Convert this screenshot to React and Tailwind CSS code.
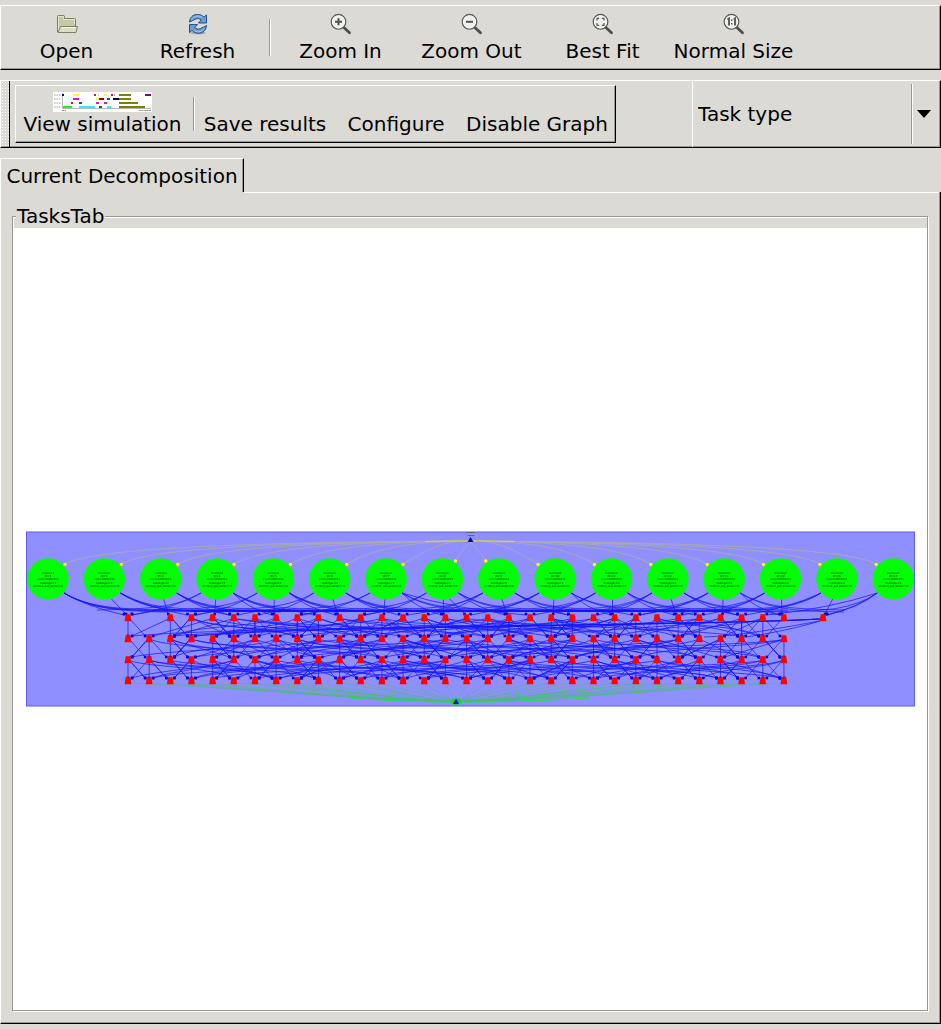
import React from "react";

const FONT = "font-['DejaVu_Sans',sans-serif]";
const RAISED = "border-t border-l border-t-white border-l-white border-b border-r border-b-black border-r-black shadow-[inset_-1px_-1px_0_#9b9890]";

function Lens({ children }) {
  return (
    <svg width="24" height="24" viewBox="0 0 24 24" aria-hidden="true">
      <path d="M14.6 15.2 L20.5 20.8" stroke="#4b4e4b" strokeWidth="2.8" strokeLinecap="round" />
      <circle cx="9.5" cy="9.8" r="7.3" fill="#efefed" stroke="#5a5d5a" strokeWidth="1.3" />
      <circle cx="9.5" cy="9.8" r="6.2" fill="none" stroke="#fff" strokeWidth="0.8" opacity="0.7" />
      {children}
    </svg>
  );
}

const icons = {
  open: (
    <svg width="24" height="24" viewBox="0 0 24 24" aria-hidden="true">
      <path d="M2.5 20 V4.5 Q2.5 3.5 3.5 3.5 H8.5 Q9.5 3.5 9.5 4.5 V6.5 H19.5 Q20.5 6.5 20.5 7.5 V19" fill="#c5caa4" stroke="#7d8165" />
      <path d="M3.5 19 V4.5 H8.5 V7.5 H19.5 V12" fill="none" stroke="#e3e6cf" />
      <path d="M5.5 14.5 H22.5 L21 20.5 H3 Z" fill="#d9e1c2" stroke="#7d8165" strokeLinejoin="round" />
      <path d="M6.3 15.5 H21.2" stroke="#f2f5e6" />
    </svg>
  ),
  refresh: (
    <svg width="24" height="24" viewBox="0 0 24 24" aria-hidden="true">
      <ellipse cx="12" cy="21" rx="8" ry="1.5" fill="#8b8d8a" opacity="0.6" />
      <g fill="#6d9bd3" stroke="#1f4b87" strokeLinejoin="round">
        <path d="M3.5 10 C4 5 7 2.5 11.5 2.5 C14.5 2.5 16.5 3.5 18 5.2 L20.5 3 V11 H12.5 L15.2 8 C13.8 6.6 11.8 6.2 9.8 7 C7.5 7.8 6 9 3.5 10 Z" />
        <path d="M20.5 13.5 C20 18.5 17 21.2 12.5 21.2 C9.5 21.2 7.5 20.2 6 18.4 L3.5 20.6 V12.6 H11.5 L8.8 15.6 C10.2 17 12.2 17.4 14.2 16.7 C16.5 15.9 18 14.7 20.5 13.5 Z" />
      </g>
      <path d="M5.5 7.5 C7 4.5 12 2.8 16 5.2 M18 16.5 C16 19.8 12 20.8 8.5 18.7" fill="none" stroke="#a9c7ea" />
    </svg>
  ),
  zoomIn: <Lens><path d="M6 9.8 H13 M9.5 6.3 V13.3" stroke="#4f524f" strokeWidth="2" /></Lens>,
  zoomOut: <Lens><path d="M6 9.8 H13" stroke="#4f524f" strokeWidth="2" /></Lens>,
  bestFit: <Lens><path d="M6 8.5 V6.3 H8.2 M10.8 6.3 H13 V8.5 M13 11.1 V13.3 H10.8 M8.2 13.3 H6 V11.1" fill="none" stroke="#5a5d5a" strokeWidth="1.2" /></Lens>,
  normal: <Lens><path d="M5.5 7.5 L7 6.5 V13.5 M11.8 7.5 L13 6.5 V13.5" fill="none" stroke="#4f524f" strokeWidth="1.8" /><path d="M9.7 7.5 V9 M9.7 11 V12.5" stroke="#4f524f" strokeWidth="1.3" /></Lens>,
};

const BARS = [
  [9, 2, 2, "#000080"], [20, 2, 6, "#ffff33"], [41, 2, 2, "#c02020"], [45, 2, 1, "#f3c0c0"], [51, 2, 3, "#ffff33"], [58, 2, 2, "#c02030"], [61, 2, 1, "#a0a0c0"], [66, 2, 12, "#808000"], [92, 2, 6, "#800080"],
  [20, 6, 6, "#dd11dd"], [43, 6, 3, "#ffff33"], [46, 6, 5, "#800000"], [54, 6, 3, "#007020"], [60, 6, 6, "#000070"], [66, 6, 12, "#808000"],
  [18, 10, 2, "#c02020"], [26, 10, 3, "#007020"], [43, 10, 3, "#dd11dd"], [51, 10, 3, "#dd11dd"], [66, 10, 19, "#808000"],
  [10, 14, 9, "#22ee22"], [26, 14, 16, "#33eeee"], [46, 14, 3, "#007020"], [54, 14, 4, "#33eeee"], [66, 14, 26, "#808000"],
];

function Timeline() {
  return (
    <svg width="99" height="20" viewBox="0 0 99 20" aria-hidden="true">
      <rect width="99" height="20" fill="#fff" />
      <path d="M9.5 1 V16.5 H98" fill="none" stroke="#999" strokeWidth="0.7" />
      {[3, 7, 11, 15].map((y) => <path key={y} d={`M1 ${y} H5 M6 ${y} H8`} stroke="#999" strokeDasharray="1 0.5" />)}
      {BARS.map(([x, y, w, c]) => <rect key={`${x}-${y}`} x={x} y={y} width={w} height="2" fill={c} />)}
      <path d="M9 18.5 H13 M86 18.5 H98" stroke="#999" strokeDasharray="2 0.5" />
    </svg>
  );
}

const ROWS = [618, 639, 660, 681];
const col = (j) => 128 + j * 21.16;
const circles = Array.from({ length: 16 }, (_, i) => 48 + i * 56.35);
const slotX = (r, j) => (r === 0 && j === 1 ? 823 : col(j));
const nodes = ROWS.flatMap((y, r) => Array.from({ length: 32 }, (_, j) => ({ x: slotX(r, j), y, r, j })));

const edges = [];
const tips = [];
for (let r = 0; r < 3; r++) {
  for (let j = 0; j < 32; j++) {
    const x = slotX(r, j);
    const spans = [j % 2 ? -1 : 1, j % 3 ? 1 : -1, 0, ((j * 7 + r * 5) % 11) - 5, ((j * 11 + r * 3) % 19) - 9, ((j * 5 + r * 7) % 27) - 13];
    spans.forEach((s, k) => {
      const t = j + s;
      if (t < 0 || t > 31 || (k === 2 && (j + r) % 3 === 1) || (r > 0 && s === 0 && k !== 2)) return;
      const end = slotX(r + 1, t);
      const dir = Math.sign(Math.round(end - x));
      const tx = end - dir * 4;
      const ty = ROWS[r + 1] - 3;
      const sy = ROWS[r] + 1;
      const dx = tx - x;
      edges.push(
        Math.abs(dx) < 70
          ? `M${x + dir * 2} ${sy} L${tx} ${ty}`
          : `M${x + dir * 3} ${sy} C${x + dx * 0.2} ${sy + 6 + (j % 5)} ${tx - dx * 0.15} ${ty - 11 + (j % 6)} ${tx} ${ty}`
      );
      tips.push([tx, ty]);
    });
  }
}

const fans = [];
circles.forEach((x, i) => {
  const near = Math.min(31, Math.max(0, Math.round((x - 128) / 21.16)));
  const mirror = 31 - near;
  const targets = i === 15 ? [1, 1, 30, 26] : i === 14 ? [1, 29, 24] : i === 0 ? [0, 5, 9] : [near, near + 3, near - 4, mirror];
  targets.forEach((t, k) => {
    if (t < 0 || t > 31) return;
    const tx = slotX(0, t);
    const s = tx > x ? 1 : -1;
    const gap = Math.abs(tx - x);
    const end = tx - s * 4;
    if (gap < 45) fans.push(`M${x + (tx - x) * 0.3} 599 L${tx - s * 2} 614`);
    else if (gap < 150) fans.push(`M${x + s * 16} 593 Q${x + s * gap * 0.5} ${607 + k} ${end} 615`);
    else fans.push(`M${x + s * 16} 593 C${x + s * 40} ${606 + k} ${x + s * 70} ${609 + k} ${x + s * 110} ${610 + (k % 2)} L${end - s * 20} 611 L${end} 615`);
    tips.push([gap < 45 ? tx - s * 2 : end, 614]);
  });
  if (i < 13) fans.push(`M${x + 16} 593 C${x + 42} 608 ${x + 70} 609 ${x + 120} 610`, `M${x + 16} 593 C${x + 44} 610 ${x + 74} 611 ${x + 120} 612`);
  if (i > 2 && i < 15) fans.push(`M${x - 16} 593 C${x - 42} 608 ${x - 70} 609 ${x - 120} 610`);
});
fans.push("M820 621 C790 630 765 634 746 637", "M820 621 C780 628 740 636 704 637");

function NodeLabel({ x, y, i }) {
  return (
    <text x={x} y={y} textAnchor="middle" fontSize="2.6" fill="#001e00">
      {["function2", `ID=${i + 1}`, `cost=100010${i + 10}`, "nodetype=3", "children_put_border=0"].map((t, k) => (
        <tspan key={k} x={x} dy={k ? 3.2 : 0}>{t}</tspan>
      ))}
    </text>
  );
}

function TaskGraph() {
  return (
    <svg viewBox="26 531 889 176" className="block w-full" role="img" aria-label="Task graph">
      <rect x="26.5" y="532" width="888" height="174" fill="#8f8fff" stroke="#5c5cf0" />
      <g fill="none" stroke="#a9a9b4" strokeWidth="0.9">
        {circles.map((x, i) => {
          const close = i === 7 || i === 8;
          const s = i < 8 ? 1 : -1;
          const ex = x + s * (close ? 13 : 17);
          return <path key={i} d={close ? `M470 541 L${ex} 560` : `M470 541 C${470 - s * Math.abs(ex - 470) * 0.45} 542 ${ex + s * 32} 546 ${ex} 564`} />;
        })}
      </g>
      <path d="M425 541.5 Q470 540 515 541.5" fill="none" stroke="#d8d840" strokeWidth="1" />
      <g fill="none" stroke="#4cba7c" strokeWidth="0.6">
        {Array.from({ length: 32 }, (_, j) => {
          const x = col(j);
          const d = x - 456;
          return <path key={j} d={Math.abs(d) < 80 ? `M${x} 684 L456 702` : `M${x} 683 C${x - d * 0.25} ${686 + (j % 5)} ${456 + d * 0.35} ${698 + (j % 3)} 456 702`} />;
        })}
      </g>
      <path d="M350 698 Q400 702 456 702 Q520 702 590 698" fill="none" stroke="#22dd55" strokeWidth="1.2" />
      <g fill="none" stroke="#1414f5" strokeWidth="0.7">
        {edges.map((d, i) => <path key={i} d={d} />)}
        {fans.map((d, i) => <path key={`f${i}`} d={d} />)}
      </g>
      <path d="M190 611 H730" stroke="#1111ff" strokeWidth="1.6" />
      {tips.map(([x, y], i) => <rect key={i} x={x - 1.3} y={y - 1.3} width="2.6" height="2.6" fill="#0000d8" />)}
      {nodes.map(({ x, y }, i) => <path key={i} d={`M${x - 2.3} ${y - 3.7} H${x + 2.3} L${x + 3.4} ${y + 3.3} H${x - 3.4} Z`} fill="#f00" />)}
      {circles.map((x, i) => (
        <g key={i}>
          <circle cx={x} cy="579" r="20.7" fill="#0f0" />
          <NodeLabel x={x} y={574} i={i} />
          <circle cx={x + (i < 8 ? 1 : -1) * (i === 7 || i === 8 ? 13 : 17)} cy={i === 7 || i === 8 ? 561 : 564.5} r="1.7" fill="#ff0" />
        </g>
      ))}
      <path d="M466 532.5 H475 M467.5 535.5 H474.5" stroke="#5a5a85" strokeWidth="0.8" />
      <path d="M470.5 537 L473.5 542 H467.5 Z" fill="#0000d8" />
      <ellipse cx="456" cy="701.5" rx="5" ry="3.5" fill="#00e020" />
      <path d="M456 698.5 L459 704 H453 Z" fill="#0000d8" />
    </svg>
  );
}

function Tool({ icon, label }) {
  return (
    <button type="button" className="flex w-[131px] flex-col items-center gap-[3px] whitespace-nowrap leading-6">
      {icon}
      <span>{label}</span>
    </button>
  );
}

function Groove({ className }) {
  return <div className={`w-0.5 border-l border-r border-l-[#9b9890] border-r-white ${className}`} />;
}

export default function App() {
  return (
    <div className={`flex min-h-screen flex-col bg-[#dcdad5] pt-[5px] pb-[5px] text-[20px] text-black ${FONT}`}>
      <div className={`flex h-[65px] items-start pt-[6px] ${RAISED}`}>
        <Tool icon={icons.open} label="Open" />
        <Tool icon={icons.refresh} label="Refresh" />
        <div className="flex w-[12px] justify-end pt-[7px] pr-1"><Groove className="h-[37px]" /></div>
        <Tool icon={icons.zoomIn} label="Zoom In" />
        <Tool icon={icons.zoomOut} label="Zoom Out" />
        <Tool icon={icons.bestFit} label="Best Fit" />
        <Tool icon={icons.normal} label="Normal Size" />
      </div>

      <div className={`mt-[10px] flex h-[68px] ${RAISED}`}>
        <div className="w-[9px] border-r border-black bg-[radial-gradient(circle,#fff_0.8px,transparent_1px)] bg-[size:3px_3px]" />
        <div className={`mt-1 ml-[5px] flex h-[58px] w-[601px] ${RAISED}`}>
          <button type="button" className="flex w-[173px] flex-col items-center whitespace-nowrap pt-[6px] leading-6">
            <Timeline />
            <span>View simulation</span>
          </button>
          <div className="flex w-[8px] justify-end pt-[11px] pr-0.5"><Groove className="h-[34px]" /></div>
          <button type="button" className="flex w-[136px] items-end justify-center whitespace-nowrap pb-[6px] leading-6">Save results</button>
          <button type="button" className="flex w-[126px] items-end justify-center whitespace-nowrap pb-[6px] leading-6">Configure</button>
          <button type="button" className="flex flex-1 items-end justify-center whitespace-nowrap pb-[6px] leading-6">Disable Graph</button>
        </div>
        <div className="relative ml-auto flex w-[248px] border-l border-white">
          <select aria-label="Colour by" className="h-full w-full appearance-none bg-transparent pl-[5px] outline-none">
            <option>Task type</option>
          </select>
          <span className="pointer-events-none absolute inset-y-0 right-0 flex w-[29px] items-center">
            <Groove className="h-[60px]" />
            <svg width="14" height="8" viewBox="0 0 14 8" className="ml-[4px]" aria-hidden="true"><path d="M0 0 H14 L7 8 Z" /></svg>
          </span>
        </div>
      </div>

      <div className="mt-[10px] flex">
        <button type="button" className="h-[34px] w-[244px] whitespace-nowrap border-t border-r border-l border-t-white border-l-white border-r-black shadow-[inset_-1px_0_0_#9b9890]">
          Current Decomposition
        </button>
        <div className="-mb-px flex-1 border-b border-white" />
      </div>
      <main className="flex flex-1 flex-col border-r border-b border-l border-l-white border-r-black border-b-black pr-[12px] pl-[11px] pt-[24px] pb-[12px] shadow-[inset_-1px_-1px_0_#9b9890]">
        <section className="flex flex-1 flex-col border border-[#9b9890] shadow-[1px_1px_0_#fff,inset_1px_1px_0_#fff]">
          <h2 className="-mt-[13px] ml-[3px] self-start bg-[#dcdad5] px-px leading-6">TasksTab</h2>
          <div className="flex flex-1 items-center bg-white pr-[12px] pl-[13px]">
            <TaskGraph />
          </div>
        </section>
      </main>
    </div>
  );
}
